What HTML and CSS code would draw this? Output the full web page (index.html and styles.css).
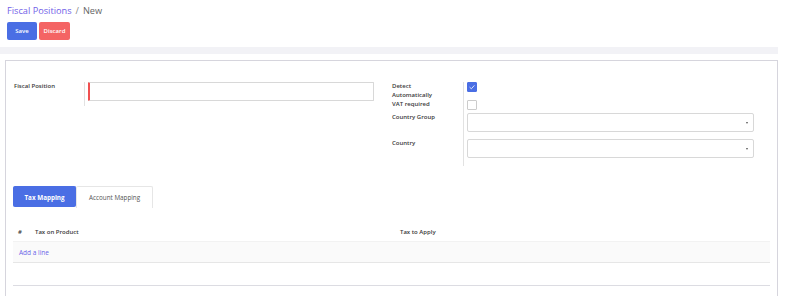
FILE: index.html
```html
<!DOCTYPE html>
<html lang="en">
<head>
    <meta charset="UTF-8">
    <title>Fiscal Positions / New</title>
    <link rel="stylesheet" href="styles.css">
</head>
<body>
    <div class="control-panel">
        <div class="breadcrumb"><a href="#">Fiscal Positions</a><span class="sep">/</span><span class="current">New</span></div>
        <div class="buttons">
            <button type="button" class="btn-save">Save</button>
            <button type="button" class="btn-discard">Discard</button>
        </div>
    </div>
    <div class="band"></div>
    <main class="sheet">
        <div class="group-row">
            <div class="group">
                <div class="field">
                    <label class="lbl">Fiscal Position</label>
                    <div class="val"><input type="text" class="input required"></div>
                </div>
            </div>
            <div class="group">
                <div class="field">
                    <label class="lbl">Detect Automatically</label>
                    <div class="val"><span class="check on">
                        <svg viewBox="0 0 10 10" width="8" height="8"><path d="M2 5.2 L4.2 7.2 L8 3" fill="none" stroke="#fff" stroke-width="1"/></svg>
                    </span></div>
                </div>
                <div class="field">
                    <label class="lbl">VAT required</label>
                    <div class="val"><span class="check"></span></div>
                </div>
                <div class="field">
                    <label class="lbl">Country Group</label>
                    <div class="val"><div class="select"><span class="caret"></span></div></div>
                </div>
                <div class="field">
                    <label class="lbl">Country</label>
                    <div class="val"><div class="select"><span class="caret"></span></div></div>
                </div>
            </div>
        </div>
        <div class="tabs">
            <div class="tab active">Tax Mapping</div>
            <div class="tab">Account Mapping</div>
        </div>
        <table class="lines">
            <thead>
                <tr><th class="col-num">#</th><th class="col-src">Tax on Product</th><th>Tax to Apply</th></tr>
            </thead>
            <tbody>
                <tr class="add-row"><td colspan="3"><a href="#">Add a line</a></td></tr>
                <tr class="empty-row"><td colspan="3"></td></tr>
            </tbody>
        </table>
    </main>
</body>
</html>
```
FILE: styles.css
```css
body {
    font-family: 'Open Sans', 'Liberation Sans', sans-serif;
    font-size: 7px;
    color: #444;
    background-color: #fff;
    margin: 0;
    overflow: hidden;
}
.control-panel {
    padding: 4px 8px 6px 7px;
}
.breadcrumb {
    font-size: 9.2px;
    line-height: 13px;
    margin-bottom: 5px;
}
.breadcrumb a {
    color: #7160e8;
    text-decoration: none;
}
.breadcrumb .sep {
    color: #888;
    margin: 0 4px;
}
.breadcrumb .current {
    color: #666;
}
.buttons {
    display: flex;
    gap: 2px;
}
.buttons button {
    height: 18px;
    border: none;
    border-radius: 2px;
    color: white;
    font-family: inherit;
    font-size: 6px;
    font-weight: 600;
    padding: 0;
}
.btn-save {
    width: 30px;
    background-color: #4a6ee4;
}
.btn-discard {
    width: 31px;
    background-color: #f46464;
}
.band {
    height: 7px;
    margin-top: 1px;
    margin-right: 9px;
    background-color: #f2f2f6;
}
.sheet {
    margin: 6px 9px 0 5px;
    border: 1px solid #d6d5dd;
    border-bottom: none;
    height: 214px;
    padding: 21px 7px 0 7px;
}
.group-row {
    display: flex;
}
.group {
    width: 50%;
    display: flex;
    flex-direction: column;
}
.group:first-child {
    width: 378px;
}
.field {
    display: flex;
}
.lbl {
    width: 70px;
    padding: 0 0 0 1px;
    font-size: 6px;
    font-weight: 600;
    color: #3a3a3a;
    line-height: 9px;
    border-right: 1px solid #e2e2e2;
}
.group:last-child .lbl {
    width: 56px;
    padding-right: 15px;
}
.val {
    flex: 1;
    padding-left: 3px;
}
.input {
    display: block;
    box-sizing: border-box;
    width: 286px;
    height: 19px;
    border: 1px solid #d8d8d8;
    border-radius: 1px;
    margin: 0 0 5px 0;
}
.input.required {
    border-left: 2px solid #f05050;
}
.check {
    display: flex;
    align-items: center;
    justify-content: center;
    box-sizing: border-box;
    width: 10px;
    height: 10px;
    border: 1px solid #ccc;
    border-radius: 1px;
    margin-bottom: 3px;
}
.check.on {
    background-color: #4a6ee4;
    border-color: #4a6ee4;
}
.select {
    position: relative;
    box-sizing: border-box;
    width: 287px;
    height: 19px;
    border: 1px solid #d8d8d8;
    border-radius: 2px;
    margin-bottom: 7px;
}
.field:last-child .select {
    margin-bottom: 8px;
}
.caret {
    position: absolute;
    right: 5px;
    top: 8px;
    border-left: 1.5px solid transparent;
    border-right: 1.5px solid transparent;
    border-top: 2px solid #555;
}
.tabs {
    display: flex;
    margin-top: 20px;
}
.tab {
    height: 21px;
    line-height: 21px;
    font-size: 6.3px;
    padding: 0 12px;
    border: 1px solid #e6e6e6;
    border-bottom: none;
    border-radius: 2px 2px 0 0;
    color: #555;
    white-space: nowrap;
}
.tab.active {
    box-sizing: border-box;
    width: 63px;
    padding: 0;
    background-color: #4a6ee4;
    border-color: #4a6ee4;
    color: white;
    font-weight: 700;
    border-radius: 2px;
    text-align: center;
}
.lines {
    width: 757px;
    border-collapse: collapse;
    margin-top: 15px;
}
.lines th {
    text-align: left;
    font-size: 6px;
    font-weight: 600;
    color: #3a3a3a;
    height: 18px;
    padding: 0;
}
.lines .col-num {
    width: 22px;
    padding-left: 5px;
    box-sizing: border-box;
}
.lines .col-src {
    width: 365px;
}
.add-row td {
    background-color: #fafafa;
    border-top: 1px solid #f2f2f2;
    border-bottom: 1px solid #e6e6e6;
    height: 20px;
    padding: 0 0 0 6px;
    font-size: 6.5px;
}
.add-row a {
    color: #6b64e8;
    text-decoration: none;
}
.empty-row td {
    height: 20px;
    border-bottom: 1px solid #dcdce2;
}
```
